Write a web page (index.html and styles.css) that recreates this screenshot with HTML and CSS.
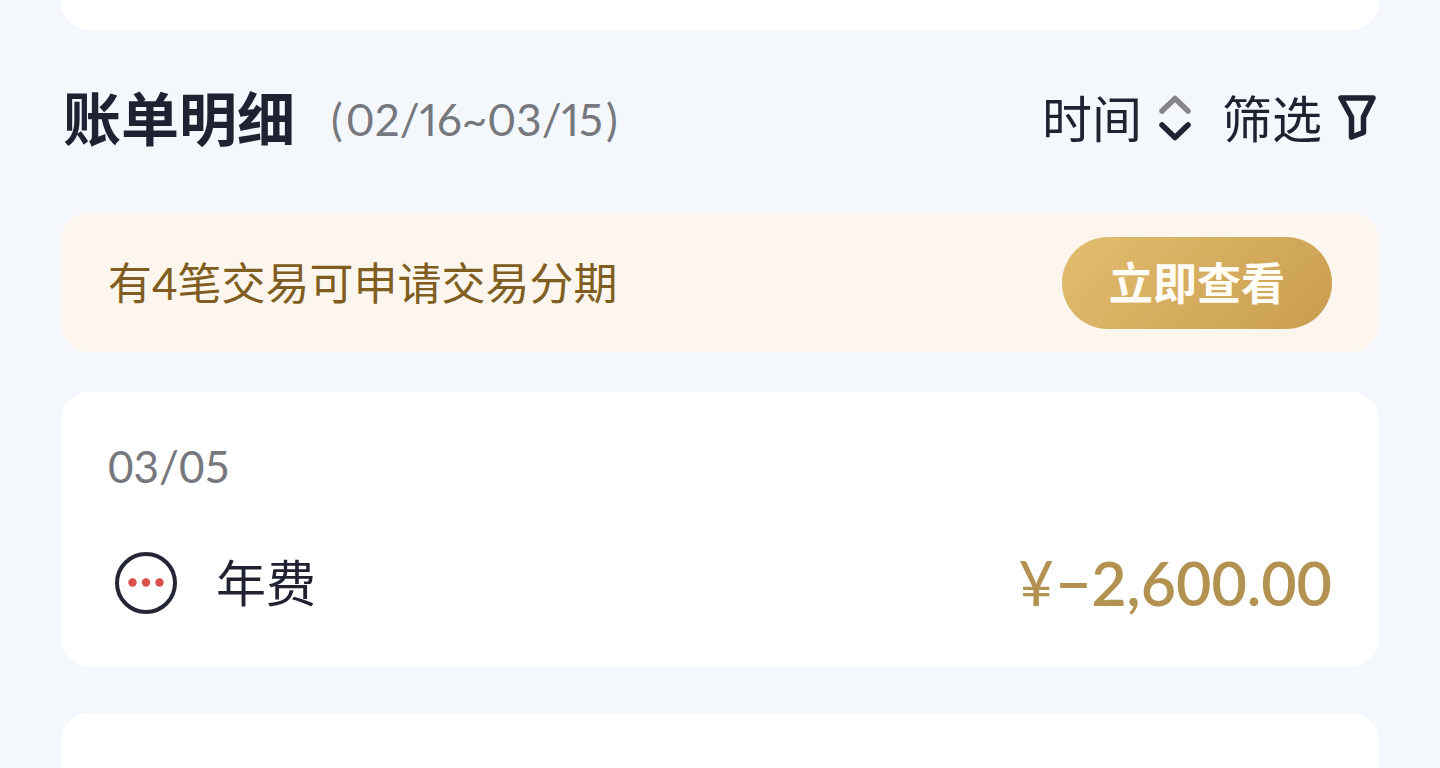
FILE: index.html
```html
<!DOCTYPE html>
<html lang="zh-CN">
<head>
<meta charset="utf-8">
<meta name="viewport" content="width=device-width, initial-scale=1">
<title>账单明细</title>
<link rel="stylesheet" href="styles.css">
</head>
<body>
<main class="page">
  <section class="card card-previous"></section>
  <header class="bill-header">
    <h1 class="bill-title">账单明细</h1>
    <span class="bill-range"><span>(</span><span>02/16~03/15</span><span>)</span></span>
    <div class="tools">
      <button class="tool" type="button">时间
        <svg class="sort-icon" viewBox="0 0 34 48" fill="none" stroke-width="5.500" stroke-linecap="round" stroke-linejoin="round" aria-hidden="true">
          <path d="M4 16 17 3.500 30 16" stroke="#85868c"/>
          <path d="M4 30 17 42.500 30 30" stroke="#202131"/>
        </svg>
      </button>
      <button class="tool" type="button">筛选
        <svg class="filter-icon" viewBox="0 0 38 48" fill="none" stroke="#202131" stroke-width="5.500" stroke-linejoin="round" aria-hidden="true">
          <path d="M3 3H35L25.500 22V37.500L13.500 42V22Z"/>
        </svg>
      </button>
    </div>
  </header>
  <section class="notice">
    <p class="notice-text">有4笔交易可申请交易分期</p>
    <button class="notice-button" type="button">立即查看</button>
  </section>
  <section class="card card-day">
    <time class="day">03/05</time>
    <div class="entry">
      <svg class="entry-icon" viewBox="0 0 62 62" aria-hidden="true">
        <circle cx="31" cy="31" r="29" fill="none" stroke="#242635" stroke-width="4"/>
        <g fill="#d9504d"><circle cx="17.500" cy="30.500" r="4.200"/><circle cx="31" cy="30.500" r="4.200"/><circle cx="44.500" cy="30.500" r="4.200"/></g>
      </svg>
      <span class="entry-name">年费</span>
      <span class="amount"><span class="currency">¥</span>−2,600.00</span>
    </div>
  </section>
  <section class="card card-next"></section>
</main>
</body>
</html>
```
FILE: styles.css
```css
* { box-sizing: border-box; }

body {
  margin: 0;
  background: #f4f8fd;
  color: #202131;
  font-family: Lato, "Noto Sans CJK SC", sans-serif;
}

.page {
  height: 100vh;
  overflow: hidden;
  padding: 0 61px;
}

.card {
  background: #fff;
  border-radius: 28px;
}

.card-previous {
  height: 30px;
  border-radius: 0 0 28px 28px;
}

.bill-header {
  display: flex;
  align-items: center;
  padding: 49px 3px 54px 2px;
}

.bill-title {
  margin: 0;
  font-size: 58px;
  line-height: 80px;
  font-weight: 700;
}

.bill-range {
  display: flex;
  gap: 3px;
  margin-left: 36px;
  color: #76787d;
  font-size: 44px;
  font-variant-numeric: proportional-nums;
  line-height: 80px;
}

.tools {
  display: flex;
  gap: 30px;
  margin-left: auto;
}

.tool {
  display: flex;
  align-items: center;
  gap: 16px;
  padding: 0;
  border: 0;
  background: none;
  color: inherit;
  font: inherit;
  font-size: 50px;
  line-height: 80px;
}

.sort-icon { width: 34px; height: 48px; }
.filter-icon { width: 38px; height: 48px; }

.notice {
  display: flex;
  align-items: center;
  justify-content: space-between;
  padding: 24px 47px 23px;
  border-radius: 28px;
  background: #fdf6ee;
}

.notice-text {
  margin: 0;
  color: #805d20;
  font-size: 44px;
  line-height: 92px;
}

.notice-button {
  padding: 0 47px;
  border: 0;
  border-radius: 46px;
  background: linear-gradient(135deg, #e2bd70, #c99d4f);
  color: #fffdf5;
  font: inherit;
  font-size: 44px;
  font-weight: 700;
  line-height: 92px;
}

.card-day {
  margin-top: 40px;
  padding: 42px 47px 44px;
}

.day {
  display: block;
  color: #76787d;
  font-size: 44px;
  line-height: 64px;
}

.entry {
  display: flex;
  align-items: center;
  margin-top: 45px;
}

.entry-icon {
  width: 62px;
  height: 62px;
  margin-left: 7px;
}

.entry-name {
  margin-left: 39px;
  font-size: 50px;
  line-height: 80px;
}

.amount {
  margin-left: auto;
  color: #b39151;
  font-size: 61px;
  font-weight: 600;
  line-height: 80px;
}

.currency {
  margin-right: 2px;
  font-weight: 400;
}

.card-next {
  height: 160px;
  margin-top: 46px;
}
```
